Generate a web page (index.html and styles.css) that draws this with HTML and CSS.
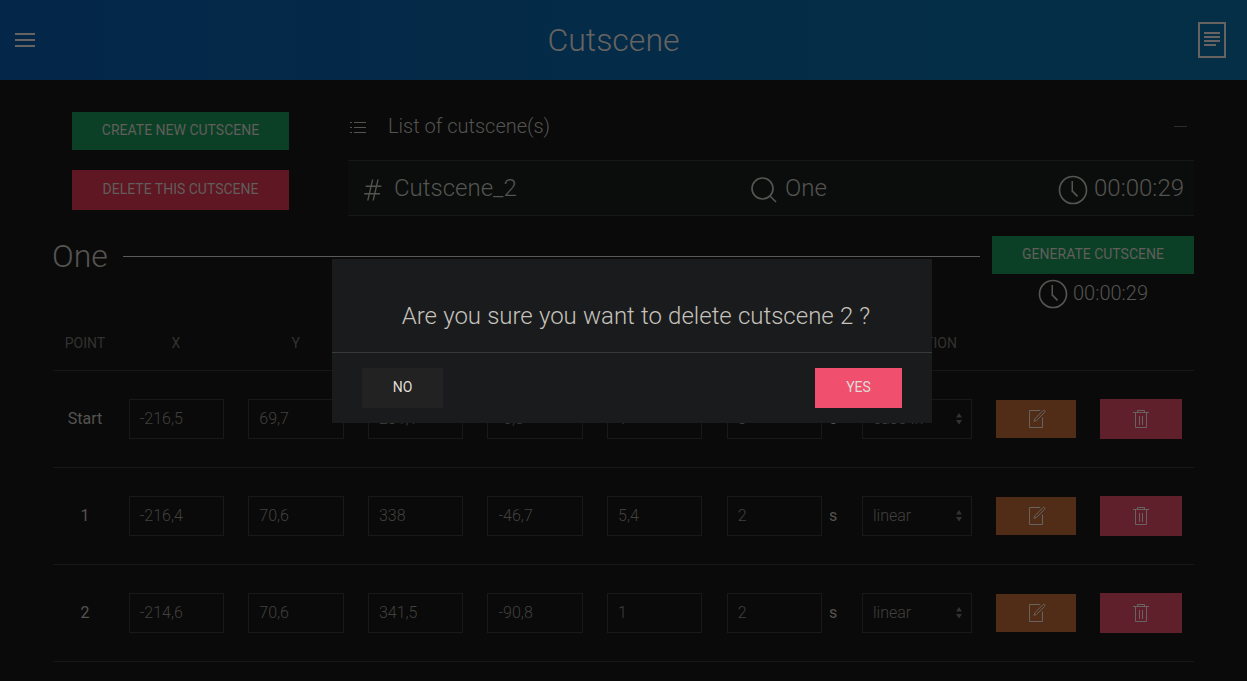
FILE: index.html
```
<!DOCTYPE html>
<html lang="en">
<head>
<meta charset="utf-8">
<title>Cutscene</title>
<link rel="stylesheet" href="styles.css">
</head>
<body>
<svg class="defs" width="0" height="0">
  <symbol id="clock" viewBox="0 0 20 20"><circle fill="none" stroke="currentColor" stroke-width="1.1" cx="10" cy="10" r="9"/><rect fill="currentColor" x="9" y="4" width="1" height="7"/><path fill="none" stroke="currentColor" stroke-width="1.1" d="M13.018,14.197 L9.445,10.625"/></symbol>
  <symbol id="edit" viewBox="0 0 20 20"><path fill="none" stroke="currentColor" d="M18.65,1.68 C18.41,1.45 18.109,1.33 17.81,1.33 C17.499,1.33 17.209,1.45 16.98,1.68 L8.92,9.76 L8,12.33 L10.55,11.41 L18.651,3.34 C19.12,2.87 19.12,2.15 18.65,1.68 Z"/><polyline fill="none" stroke="currentColor" points="16.5 8.482 16.5 18.5 3.5 18.5 3.5 1.5 14.211 1.5"/></symbol>
  <symbol id="trash" viewBox="0 0 20 20"><polyline fill="none" stroke="currentColor" points="6.5 3 6.5 1.5 13.5 1.5 13.5 3"/><polyline fill="none" stroke="currentColor" points="4.5 4 4.5 18.5 15.5 18.5 15.5 4"/><path fill="currentColor" d="M8 7h1v9h-1zM11 7h1v9h-1zM2 3h16v1h-16z"/></symbol>
  <symbol id="arrows" viewBox="0 0 6 12"><path fill="currentColor" d="M0 4.5L3 0L6 4.5zM0 7H6L3 11.5z"/></symbol>
</svg>
<header class="navbar">
  <svg class="menu" width="20" height="20" viewBox="0 0 20 20"><path fill="currentColor" d="M0 3h20v2H0zM0 9h20v2H0zM0 15h20v2H0z"/></svg>
  <h1 class="brand">Cutscene</h1>
  <svg class="doc" width="40" height="40" viewBox="0 0 20 20" fill="none" stroke="currentColor"><rect x="3.5" y="1.5" width="13" height="17"/><path d="M6 12.5h6M6 8.5h8M6 6.5h8M6 10.5h8"/></svg>
</header>
<main class="page">
  <section class="top">
    <div class="actions">
      <button class="btn create">Create new cutscene</button>
      <button class="btn delete">Delete this cutscene</button>
    </div>
    <div class="list">
      <div class="list-head">
        <svg width="20" height="20" viewBox="0 0 20 20"><path fill="currentColor" d="M6 4h12v1H6zM6 9h12v1H6zM6 14h12v1H6zM2 4h2v1H2zM2 9h2v1H2zM2 14h2v1H2z"/></svg>
        <span class="list-title">List of cutscene(s)</span>
        <span class="collapse"></span>
      </div>
      <div class="list-item">
        <div class="item-name"><svg width="30" height="30" viewBox="0 0 20 20"><path fill="currentColor" d="M15.431,8 L15.661,7 L12.911,7 L13.831,3 L12.901,3 L11.98,7 L9.29,7 L10.21,3 L9.281,3 L8.361,7 L5.23,7 L5,8 L8.13,8 L7.21,12 L4.23,12 L4,13 L6.98,13 L6.05,17 L6.98,17 L7.9,13 L10.59,13 L9.66,17 L10.59,17 L11.52,13 L14.5,13 L14.73,12 L11.75,12 L12.67,8 L15.431,8 Z M10.82,12 L8.13,12 L9.05,8 L11.74,8 L10.82,12 Z"/></svg><span>Cutscene_2</span></div>
        <div class="item-point"><svg width="30" height="30" viewBox="0 0 20 20" fill="none" stroke="currentColor" stroke-width="1.1"><circle cx="9" cy="9" r="7"/><path d="M14,14 L18,18"/></svg><span>One</span></div>
        <div class="item-time"><svg width="30" height="30"><use href="#clock"/></svg><span>00:00:29</span></div>
      </div>
    </div>
  </section>
  <section class="current">
    <h2 class="name">One</h2>
    <div class="rule"></div>
    <div class="generate">
      <button class="btn create">Generate cutscene</button>
      <div class="total"><svg width="30" height="30"><use href="#clock"/></svg><span>00:00:29</span></div>
    </div>
  </section>
  <section class="table">
    <div class="row head"><span>Point</span><span>X</span><span>Y</span><span></span><span></span><span></span><span></span><span>Transition</span></div>
    <div class="row">
      <span class="point">Start</span><div class="field">-216,5</div><div class="field">69,7</div><div class="field">231,1</div><div class="field">-6,8</div><div class="field">1</div>
      <div class="duration"><div class="field">3</div><span>s</span></div>
      <div class="field select"><span>ease-in</span><svg width="6" height="12"><use href="#arrows"/></svg></div>
      <button class="icon-btn edit"><svg width="20" height="20"><use href="#edit"/></svg></button><button class="icon-btn remove"><svg width="20" height="20"><use href="#trash"/></svg></button>
    </div>
    <div class="row">
      <span class="point">1</span><div class="field">-216,4</div><div class="field">70,6</div><div class="field">338</div><div class="field">-46,7</div><div class="field">5,4</div>
      <div class="duration"><div class="field">2</div><span>s</span></div>
      <div class="field select"><span>linear</span><svg width="6" height="12"><use href="#arrows"/></svg></div>
      <button class="icon-btn edit"><svg width="20" height="20"><use href="#edit"/></svg></button><button class="icon-btn remove"><svg width="20" height="20"><use href="#trash"/></svg></button>
    </div>
    <div class="row">
      <span class="point">2</span><div class="field">-214,6</div><div class="field">70,6</div><div class="field">341,5</div><div class="field">-90,8</div><div class="field">1</div>
      <div class="duration"><div class="field">2</div><span>s</span></div>
      <div class="field select"><span>linear</span><svg width="6" height="12"><use href="#arrows"/></svg></div>
      <button class="icon-btn edit"><svg width="20" height="20"><use href="#edit"/></svg></button><button class="icon-btn remove"><svg width="20" height="20"><use href="#trash"/></svg></button>
    </div>
  </section>
</main>
<div class="modal" role="dialog">
  <div class="modal-body">Are you sure you want to delete cutscene 2 ?</div>
  <div class="modal-footer"><button class="btn no">No</button><button class="btn yes">Yes</button></div>
</div>
</body>
</html>
```
FILE: styles.css
```
* { box-sizing: border-box; }
body {
  margin: 0;
  height: 681px;
  overflow: hidden;
  background: #0a0a0a;
  color: #555451;
  font: 300 16px/24px Roboto, sans-serif;
}
svg { display: block; flex: none; }
.defs { position: absolute; }
h1, h2 { margin: 0; font-weight: 300; }
button { border: 0; padding: 0; font-family: inherit; }

.navbar {
  display: grid;
  grid-template-columns: 20px 1fr 40px;
  align-items: center;
  height: 80px;
  padding: 0 15px;
  color: #666360;
  background: linear-gradient(90deg, #042749, #042f46);
}
.brand { text-align: center; font-size: 32px; line-height: 40px; }

.page { padding: 32px 53px 0; }
.top { display: flex; height: 104px; }
.actions { display: flex; flex-direction: column; gap: 20px; width: 217px; margin-left: 19px; }
.btn {
  height: 40px;
  padding-bottom: 2px;
  font-size: 14px;
  font-weight: 400;
  line-height: 36px;
  text-transform: uppercase;
  color: #615e5b;
}
.create { height: 38px; background: #0b4027; }
.delete { background: #5f1723; line-height: 38px; }

.list { width: 846px; margin-left: 59px; }
.list-head { display: flex; align-items: center; height: 48px; padding: 0 7px 20px 0; font-size: 20px; }
.list-head svg { margin-top: 4px; }
.list-title { flex: 1; margin-left: 20px; }
.collapse { width: 13px; height: 1px; background: #2c2c2c; }
.list-item {
  display: grid;
  grid-template-columns: 391px 1fr auto;
  height: 56px;
  padding: 0 10px;
  border: 1px solid #151817;
  border-width: 1px 0;
  background: #0a0d0c;
  font-size: 24px;
  line-height: 54px;
}
.list-item div { display: flex; }
.list-item svg { margin-top: 14px; }
.list-item span { margin-left: 6px; }

.current { display: flex; height: 92px; margin-top: 20px; }
.name { margin-left: -1px; font-size: 32px; line-height: 40px; }
.rule { flex: 1; height: 1px; margin: 20px 12px 0 15px; background: #5b5a58; }
.generate { display: flex; flex-direction: column; align-items: center; width: 202px; }
.generate .btn { width: 202px; }
.total { display: flex; gap: 5px; margin-top: 5px; font-size: 20px; line-height: 28px; }

.row {
  display: grid;
  grid-template-columns: 76px repeat(5, 119.6px) 135px 134px 104px 82px;
  align-items: center;
  width: 1141px;
  height: 97px;
  border-bottom: 1px solid #181818;
}
.head {
  height: 43px;
  padding-bottom: 12px;
  font-size: 14px;
  font-weight: 400;
  text-transform: uppercase;
  color: #333231;
}
.head span { width: 94px; text-align: center; }
.head span:first-child, .point { width: 64px; text-align: center; }
.head span:last-child { width: 110px; }
.point, .duration { font-weight: 400; }
.field {
  width: 95.4px;
  height: 40px;
  margin-left: -0.3px;
  padding: 0 10px;
  border: 1px solid #191919;
  line-height: 37px;
  font-weight: 300;
  color: #42403e;
}
.duration { display: flex; align-items: center; gap: 7px; }
.select { display: flex; align-items: flex-start; justify-content: space-between; width: 110px; margin-left: 0; padding-right: 9px; }
.select svg { margin-top: 13px; color: #333; }
.icon-btn { display: flex; align-items: center; justify-content: center; height: 40px; color: #666360; }
.edit { width: 80px; height: 38px; background: #512d17; }
.remove { width: 82px; background: #5f202c; }

.modal {
  position: absolute;
  left: 332px;
  top: 259px;
  width: 600px;
  height: 164px;
  background: #1a1b1c;
}
.modal-body {
  height: 94px;
  padding: 40px 0 0 8px;
  border-bottom: 1px solid #353b3b;
  text-align: center;
  font-size: 24px;
  line-height: 34px;
  word-spacing: 0.3px;
  color: #c6c2bd;
}
.modal-footer { display: flex; justify-content: space-between; padding: 15px 30px; }
.modal .btn { line-height: 38px; color: #e0dcd8; }
.no { width: 81px; background: #222; }
.yes { width: 87px; background: #f0506e; }
```
